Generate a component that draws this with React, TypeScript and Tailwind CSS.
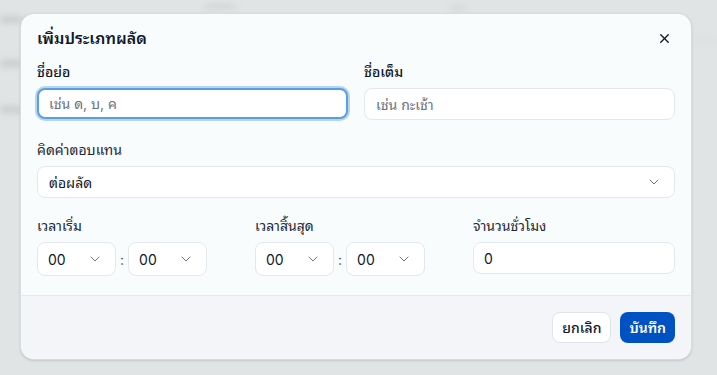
import { X, ChevronDown } from 'lucide-react';

const font = {
  fontFamily:
    'Inter, "Noto Sans Thai Looped", "Noto Serif Thai", Loma, Garuda, Sarabun, Tahoma, "Noto Sans Thai", "Noto Sans", sans-serif',
};

function TimeSelect({ value }: { value: string }) {
  return (
    <div className="flex h-[34px] w-[79px] items-center justify-between rounded-lg border border-[#e3e7ee] bg-white pl-[10px] pr-[12px] text-[14px] text-[#111827]">
      <span>{value}</span>
      <ChevronDown className="h-4 w-4 text-[#6b7280]" strokeWidth={1.5} />
    </div>
  );
}

function TimeField({ label }: { label: string }) {
  return (
    <div className="flex flex-col">
      <label className="mb-[6px] text-[14px] leading-5 text-[#1f2937]">{label}</label>
      <div className="flex items-center gap-[4px]">
        <TimeSelect value="00" />
        <span className="text-[14px] text-[#4b5563]">:</span>
        <TimeSelect value="00" />
      </div>
    </div>
  );
}

export default function App() {
  return (
    <div className="relative h-[375px] w-[717px] overflow-hidden bg-[#e1e4e5]" style={font}>
      {/* blurred page behind the backdrop */}
      <div className="absolute inset-0 blur-[3px]">
        <div className="absolute left-0 top-[16px] h-[7px] w-[22px] rounded bg-[#c9cccd]" />
        <div className="absolute left-0 top-[60px] h-[7px] w-[22px] rounded bg-[#c9cccd]" />
        <div className="absolute left-0 top-[106px] h-[7px] w-[22px] rounded bg-[#c9cccd]" />
        <div className="absolute left-[205px] top-[4px] h-[5px] w-[30px] rounded bg-[#d0d3d4]" />
        <div className="absolute left-[450px] top-[6px] h-[4px] w-[16px] rounded bg-[#d0d3d4]" />
        <div className="absolute left-[692px] top-[40px] h-[2px] w-[25px] bg-[#d6d9da]" />
      </div>

      <div className="relative ml-[20px] mt-[13px] flex w-[672px] flex-col overflow-hidden rounded-[14px] border border-[#d9dcde] bg-[#f9fcfd] shadow-sm">
        <div className="px-4 pb-[19px] pt-[12px]">
          <div className="flex items-center justify-between">
            <h2 className="text-[16px] font-semibold leading-6 text-[#111827]">เพิ่มประเภทผลัด</h2>
            <X className="mr-[3px] h-[15px] w-[15px] text-[#111827]" strokeWidth={2.2} />
          </div>

          <div className="mt-[12px] grid grid-cols-2 gap-4">
            <div className="flex flex-col">
              <label className="mb-[6px] text-[14px] font-medium leading-5 text-[#111827]">ชื่อย่อ</label>
              <input
                placeholder="เช่น ด, บ, ค"
                className="h-[31px] rounded-lg border-2 border-[#5a9fdf] bg-white px-[10px] text-[14px] text-[#111827] outline-none ring-2 ring-[#b7d5f2] placeholder:text-[#6b7280]"
              />
            </div>
            <div className="flex flex-col">
              <label className="mb-[6px] text-[14px] font-medium leading-5 text-[#111827]">ชื่อเต็ม</label>
              <input
                placeholder="เช่น กะเช้า"
                className="h-[32px] rounded-lg border border-[#e3e7ee] bg-white px-[11px] text-[14px] text-[#111827] outline-none placeholder:text-[#6b7280]"
              />
            </div>
          </div>

          <div className="mt-[20px] flex flex-col">
            <label className="mb-[6px] text-[14px] leading-5 text-[#1f2937]">คิดค่าตอบแทน</label>
            <div className="flex h-[32px] items-center justify-between rounded-lg border border-[#e3e7ee] bg-white pl-[11px] pr-[12px] text-[14px] text-[#111827]">
              <span>ต่อผลัด</span>
              <ChevronDown className="h-4 w-4 text-[#6b7280]" strokeWidth={1.5} />
            </div>
          </div>

          <div className="mt-[18px] grid grid-cols-3 gap-4">
            <TimeField label="เวลาเริ่ม" />
            <TimeField label="เวลาสิ้นสุด" />
            <div className="flex flex-col">
              <label className="mb-[6px] text-[14px] leading-5 text-[#1f2937]">จำนวนชั่วโมง</label>
              <input
                defaultValue="0"
                className="h-[32px] rounded-lg border border-[#e3e7ee] bg-white px-[10px] text-[14px] text-[#111827] outline-none"
              />
            </div>
          </div>
        </div>

        <div className="flex h-[64px] items-center justify-end gap-[9px] border-t border-[#e6e9ee] bg-[#f3f5f9] px-4">
          <button className="h-[31px] rounded-lg border border-[#dfe3ea] bg-white px-[9px] text-[14px] font-medium text-[#111827]">
            ยกเลิก
          </button>
          <button className="h-[31px] rounded-lg bg-[#0052c2] px-[9px] text-[14px] font-semibold text-white">
            บันทึก
          </button>
        </div>
      </div>
    </div>
  );
}
